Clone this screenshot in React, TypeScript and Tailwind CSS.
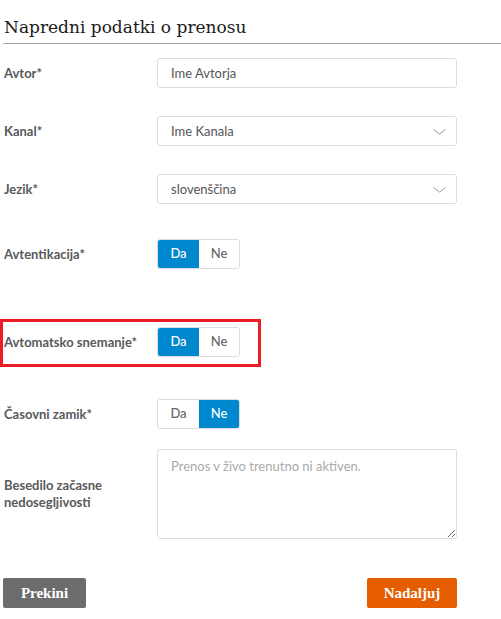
import { useState } from "react";

const sans = "font-['Lato','Open_Sans',sans-serif]";
const serif = "font-['DejaVu_Serif','Liberation_Serif',serif]";
const btnSerif = "font-['Liberation_Serif','DejaVu_Serif',serif]";

const Label = ({ children }: { children: React.ReactNode }) => (
  <div className="w-[154px] shrink-0 pl-[1px] text-[13px] font-bold leading-[17px] text-[#58595b]">
    {children}
  </div>
);

const Chevron = () => (
  <svg width="13" height="6" viewBox="0 0 13 6" className="absolute right-[10px] top-[12px]">
    <polyline points="0.5,0.5 6.5,5 12.5,0.5" fill="none" stroke="#9a9a9a" strokeWidth="1" />
  </svg>
);

const Toggle = ({ value }: { value: boolean }) => (
  <div className="flex h-[30px] w-[83px] overflow-hidden rounded-[3px] border border-[#dcdcdc] text-[13px] font-medium">
    <button
      className={
        "flex w-[41px] items-center justify-center " +
        (value ? "bg-[#0088cf] text-white" : "bg-white text-[#666]")
      }
    >
      Da
    </button>
    <button
      className={
        "flex flex-1 items-center justify-center " +
        (!value ? "bg-[#0088cf] text-white" : "bg-white text-[#666]")
      }
    >
      Ne
    </button>
  </div>
);

export default function App() {
  const [author] = useState("Ime Avtorja");

  return (
    <div className={`w-[501px] h-[619px] bg-white ${sans}`}>
      <h1 className={`${serif} pl-[4px] pt-[14px] text-[17px] leading-[26px] text-[#1a1a1a]`}>
        Napredni podatki o prenosu
      </h1>
      <div className="ml-[3px] mt-[3px] h-px bg-[#a8a8a8]" />

      <div className="pl-[3px]">
        <div className="mt-[14px] flex items-center">
          <Label>Avtor*</Label>
          <input
            defaultValue={author}
            className="h-[30px] w-[300px] rounded-[3px] border border-[#dcdcdc] px-[13px] text-[13px] text-[#555] outline-none"
          />
        </div>

        <div className="mt-[28px] flex items-center">
          <Label>Kanal*</Label>
          <div className="relative h-[30px] w-[300px] rounded-[3px] border border-[#dcdcdc] px-[13px] text-[13px] leading-[28px] text-[#555]">
            Ime Kanala
            <Chevron />
          </div>
        </div>

        <div className="mt-[28px] flex items-center">
          <Label>Jezik*</Label>
          <div className="relative h-[30px] w-[300px] rounded-[3px] border border-[#dcdcdc] px-[13px] text-[13px] leading-[28px] text-[#555]">
            slovenščina
            <Chevron />
          </div>
        </div>

        <div className="mt-[35px] flex items-center">
          <Label>Avtentikacija*</Label>
          <Toggle value />
        </div>

        <div className="relative mt-[58px] flex items-center">
          <div className="pointer-events-none absolute left-[-3px] top-[-8px] h-[48px] w-[261px] border-[3px] border-[#ec1c24]" />
          <Label>Avtomatsko snemanje*</Label>
          <Toggle value />
        </div>

        <div className="mt-[42px] flex items-center">
          <Label>Časovni zamik*</Label>
          <Toggle value={false} />
        </div>

        <div className="mt-[20px] flex items-center">
          <Label>
            Besedilo začasne
            <br />
            nedosegljivosti
          </Label>
          <textarea
            placeholder="Prenos v živo trenutno ni aktiven."
            className="h-[90px] w-[300px] rounded-[3px] border border-[#dcdcdc] px-[13px] py-[7px] text-[13px] text-[#555] outline-none placeholder:text-[#aaa]"
          />
        </div>

        <div className="mt-[39px] flex w-[454px] justify-between">
          <button className={`${btnSerif} h-[30px] w-[83px] rounded-[2px] bg-[#6b6c6e] text-[15px] font-bold text-white`}>
            Prekini
          </button>
          <button className={`${btnSerif} h-[30px] w-[90px] rounded-[2px] bg-[#e65c00] text-[15px] font-bold text-white`}>
            Nadaljuj
          </button>
        </div>
      </div>
    </div>
  );
}
